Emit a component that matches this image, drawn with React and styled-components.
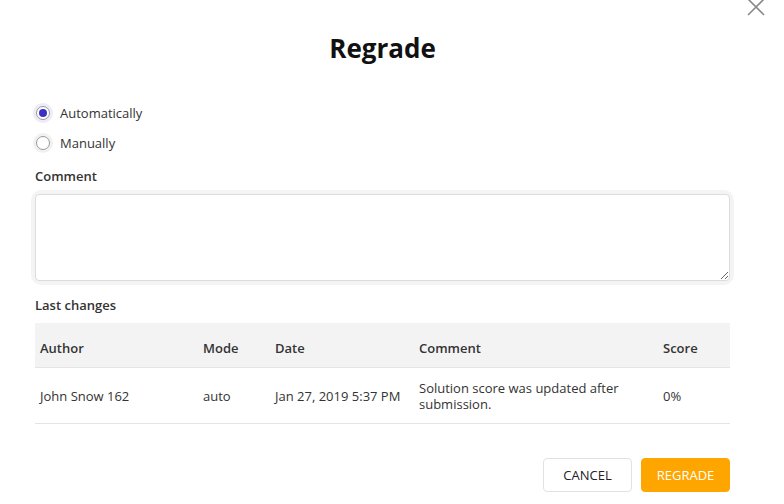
import styled, { createGlobalStyle } from 'styled-components';

const GlobalStyle = createGlobalStyle`
	body {
		margin: 0;
		background: #fff;
		font-family: 'Open Sans', 'Liberation Sans', sans-serif;
		color: #222;
	}
`;

const rows = [
	{
		author: 'John Snow 162',
		mode: 'auto',
		date: 'Jan 27, 2019 5:37 PM',
		comment: 'Solution score was updated after submission.',
		score: '0%',
	},
];

export default function App() {
	return (
		<>
			<GlobalStyle />
			<Modal>
				<CloseButton aria-label='Close'>
					<svg width='20' height='20' viewBox='0 0 20 20'>
						<path d='M2 2 L18 18 M18 2 L2 18' stroke='#8a8a8a' strokeWidth='1.6' fill='none' />
					</svg>
				</CloseButton>
				<Title>Regrade</Title>

				<RadioGroup>
					<RadioRow>
						<Radio checked />
						<span>Automatically</span>
					</RadioRow>
					<RadioRow>
						<Radio />
						<span>Manually</span>
					</RadioRow>
				</RadioGroup>

				<Label>Comment</Label>
				<TextareaWrap>
					<Textarea />
				</TextareaWrap>

				<Label gap={15}>Last changes</Label>
				<Table>
					<colgroup>
						<col style={{ width: 163 }} />
						<col style={{ width: 72 }} />
						<col style={{ width: 144 }} />
						<col style={{ width: 244 }} />
						<col />
					</colgroup>
					<thead>
						<tr>
							<th>Author</th>
							<th>Mode</th>
							<th>Date</th>
							<th>Comment</th>
							<th>Score</th>
						</tr>
					</thead>
					<tbody>
						{rows.map((r, i) => (
							<tr key={i}>
								<td>{r.author}</td>
								<td>{r.mode}</td>
								<td>{r.date}</td>
								<td>{r.comment}</td>
								<td>{r.score}</td>
							</tr>
						))}
					</tbody>
				</Table>

				<Actions>
					<Button>CANCEL</Button>
					<Button primary>REGRADE</Button>
				</Actions>
			</Modal>
		</>
	);
}

const Modal = styled.div`
	position: relative;
	width: 784px;
	height: 504px;
	box-sizing: border-box;
	padding: 30px 54px 0 35px;
	font-size: 13px;
	overflow: hidden;
`;

const CloseButton = styled.div`
	position: absolute;
	top: -3px;
	right: 18px;
	width: 20px;
	height: 20px;
`;

const Title = styled.h1`
	margin: 0;
	text-align: center;
	font-size: 26px;
	line-height: 36px;
	font-weight: 700;
	color: #111;
`;

const RadioGroup = styled.div`
	margin-top: 32px;
	display: flex;
	flex-direction: column;
`;

const RadioRow = styled.label`
	display: flex;
	align-items: center;
	gap: 10px;
	height: 30px;
	color: #333;
`;

const Radio = styled.span`
	width: 14px;
	height: 14px;
	box-sizing: border-box;
	border-radius: 50%;
	border: 1px solid #999;
	background: #fff;
	position: relative;
	box-shadow: 0 0 0 3px ${(p) => (p.checked ? '#ecebf7' : '#f1f1f1')};
	margin-left: 1px;

	&::after {
		content: '';
		display: ${(p) => (p.checked ? 'block' : 'none')};
		position: absolute;
		inset: 2px;
		border-radius: 50%;
		background: #3a30c4;
	}
`;

const Label = styled.div`
	font-weight: 600;
	color: #333;
	margin-top: ${(p) => p.gap || 9}px;
	line-height: 18px;
`;

const TextareaWrap = styled.div`
	margin-top: 9px;
	padding: 0;
	border-radius: 6px;
	box-shadow: 0 0 0 4px #f4f4f4;
`;

const Textarea = styled.textarea`
	display: block;
	width: 100%;
	height: 87px;
	box-sizing: border-box;
	border: 1px solid #dcdcdc;
	border-radius: 4px;
	resize: vertical;
	font-family: inherit;
	margin: 0;
	outline: none;
`;

const Table = styled.table`
	width: 100%;
	margin-top: 9px;
	border-collapse: collapse;
	table-layout: fixed;

	th {
		background: #f3f3f3;
		height: 38px;
		text-align: left;
		font-weight: 600;
		color: #333;
		padding: 6px 5px 0;
		border-bottom: 1px solid #e4e4e4;
	}

	td {
		height: 55px;
		padding: 0 5px;
		color: #333;
		line-height: 16px;
		border-bottom: 1px solid #e4e4e4;
	}
`;

const Actions = styled.div`
	display: flex;
	justify-content: flex-end;
	gap: 9px;
	margin-top: 34px;
`;

const Button = styled.button`
	height: 34px;
	min-width: 89px;
	padding: 0 14px;
	border-radius: 4px;
	font-family: inherit;
	font-size: 13px;
	cursor: pointer;
	border: 1px solid ${(p) => (p.primary ? '#ffa500' : '#e2e2e2')};
	background: ${(p) => (p.primary ? '#ffa500' : '#fff')};
	color: ${(p) => (p.primary ? '#fff' : '#222')};
`;
